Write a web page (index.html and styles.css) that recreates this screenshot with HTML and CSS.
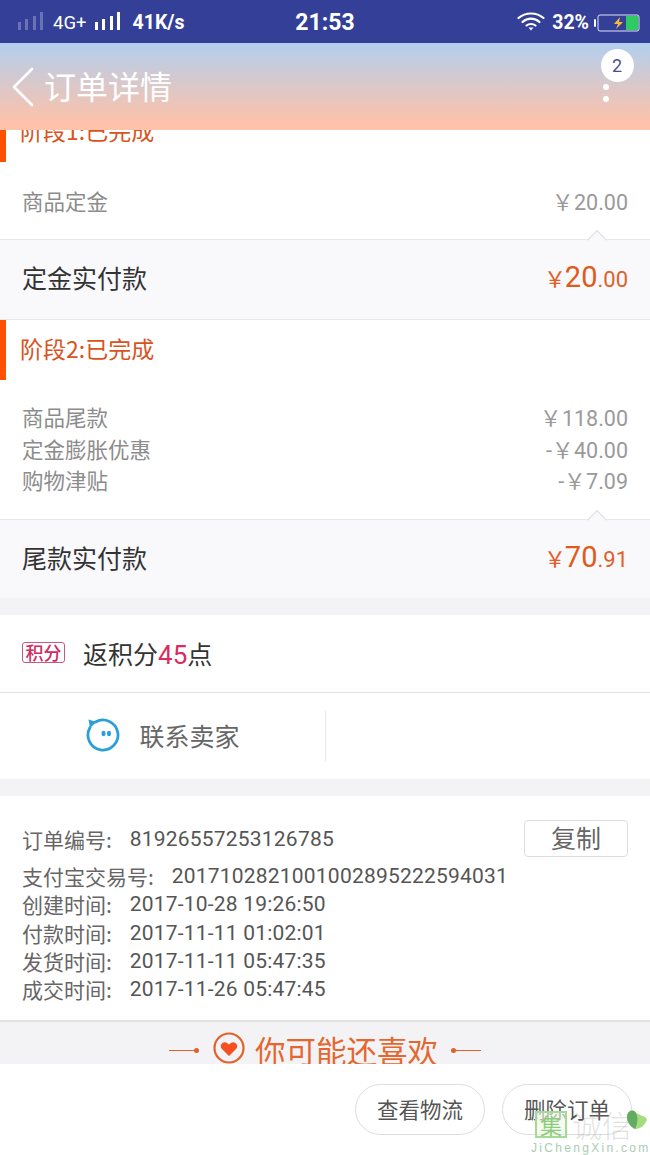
FILE: index.html
```html
<!DOCTYPE html>
<html lang="zh-CN">
<head>
    <meta charset="UTF-8">
    <meta name="viewport" content="width=device-width, initial-scale=1.0">
    <title>订单详情</title>
    <link rel="stylesheet" href="styles.css">
</head>
<body>
<div class="phone">

    <!-- Status bar -->
    <div class="statusbar">
        <div class="status-left">
            <svg class="signal dim" width="26" height="18" viewBox="0 0 26 18"><rect x="0" y="10" width="3" height="8"/><rect x="7" y="7" width="3" height="11"/><rect x="15" y="4" width="3" height="14"/><rect x="22" y="0" width="3" height="18"/></svg>
            <span class="net">4G+</span>
            <svg class="signal" width="26" height="18" viewBox="0 0 26 18"><rect x="0" y="10" width="3" height="8"/><rect x="7" y="7" width="3" height="11"/><rect x="15" y="4" width="3" height="14"/><rect x="22" y="0" width="3" height="18"/></svg>
            <span class="speed">41K/s</span>
        </div>
        <div class="clock">21:53</div>
        <div class="status-right">
            <svg class="wifi" width="28" height="20" viewBox="0 0 28 20" fill="none" stroke="#fff" stroke-width="2.2" stroke-linecap="round"><path d="M1.5 7C8.5 1 19.5 1 26.5 7"/><path d="M5.5 11C10.5 6.5 17.5 6.5 22.5 11"/><path d="M9.5 14.5C12 12.5 16 12.5 18.5 14.5"/><path d="M11.5 16.5L14 19.5L16.5 16.5Z" fill="#fff" stroke="none"/></svg>
            <span class="percent">32%</span>
            <svg class="battery" width="46" height="18" viewBox="0 0 46 18"><rect x="0" y="5" width="2" height="8" rx="1" fill="#fff"/><rect x="4" y="1" width="41" height="16" rx="2" fill="none" stroke="#dfe3f2" stroke-width="1"/><rect x="32" y="2" width="12" height="14" fill="#2ecb62"/><path d="M26 3L20 10H24L22 15L29 8H25Z" fill="#f2bd3c"/></svg>
        </div>
    </div>

    <!-- Title bar -->
    <div class="navbar">
        <svg class="back" width="24" height="40" viewBox="0 0 24 40" fill="none" stroke="#fff" stroke-width="2.6" stroke-linecap="round" stroke-linejoin="round"><path d="M21 2L3 20L21 38"/></svg>
        <h1 class="nav-title">订单详情</h1>
        <div class="menu">
            <span class="menu-badge">2</span>
            <span class="menu-dot"></span>
            <span class="menu-dot"></span>
        </div>
    </div>

    <!-- Scrolled order content -->
    <div class="scroll">
        <div class="scroll-inner">

            <div class="stage-head">阶段1:已完成</div>
            <div class="fees fees-single">
                <div class="fee"><span>商品定金</span><span class="fee-num">￥20.00</span></div>
            </div>
            <div class="total">
                <span class="notch"></span>
                <span>定金实付款</span>
                <span class="price"><i class="yen">￥</i><b>20</b>.00</span>
            </div>

            <div class="stage-head">阶段2:已完成</div>
            <div class="fees">
                <div class="fee"><span>商品尾款</span><span class="fee-num">￥118.00</span></div>
                <div class="fee"><span>定金膨胀优惠</span><span class="fee-num">-￥40.00</span></div>
                <div class="fee"><span>购物津贴</span><span class="fee-num">-￥7.09</span></div>
            </div>
            <div class="total total-last">
                <span class="notch"></span>
                <span>尾款实付款</span>
                <span class="price"><i class="yen">￥</i><b>70</b>.91</span>
            </div>

            <div class="gap"></div>

            <div class="points">
                <span class="points-tag">积分</span>
                <span>返积分<em>45</em>点</span>
            </div>

            <div class="contact">
                <div class="contact-cell">
                    <svg class="contact-icon" width="36" height="36" viewBox="0 0 36 36" fill="none"><path d="M9.5 5A15 15 0 1 1 4 10.5" stroke="#2a9fdc" stroke-width="2.8" stroke-linecap="round"/><path d="M2.5 2.5L10.5 5L4 11Z" fill="#2a9fdc"/><ellipse cx="17.5" cy="16.5" rx="2" ry="2.8" fill="#2a9fdc"/><ellipse cx="23" cy="16.5" rx="2" ry="2.8" fill="#2a9fdc"/></svg>
                    <span>联系卖家</span>
                </div>
                <div class="contact-cell"></div>
            </div>

            <div class="gap"></div>

            <div class="info">
                <div class="info-first">
                    <div class="info-row"><span class="info-label">订单编号:</span><span class="info-val">81926557253126785</span></div>
                    <button class="copy">复制</button>
                </div>
                <div class="info-row"><span class="info-label">支付宝交易号:</span><span class="info-val">2017102821001002895222594031</span></div>
                <div class="info-row"><span class="info-label">创建时间:</span><span class="info-val">2017-10-28 19:26:50</span></div>
                <div class="info-row"><span class="info-label">付款时间:</span><span class="info-val">2017-11-11 01:02:01</span></div>
                <div class="info-row"><span class="info-label">发货时间:</span><span class="info-val">2017-11-11 05:47:35</span></div>
                <div class="info-row"><span class="info-label">成交时间:</span><span class="info-val">2017-11-26 05:47:45</span></div>
            </div>

            <div class="recommend">
                <span class="rec-line"><i></i></span>
                <svg width="34" height="34" viewBox="0 0 34 34" fill="none"><circle cx="17" cy="17" r="14.5" stroke="#e2602a" stroke-width="2.2"/><path d="M17 25L9.5 17.5C7 14 11.5 9.5 15 12L17 13.5L19 12C22.5 9.5 27 14 24.5 17.5Z" fill="#f4511e"/></svg>
                <span class="rec-text">你可能还喜欢</span>
                <span class="rec-line rec-line-right"><i></i></span>
            </div>

        </div>
    </div>

    <!-- Order actions -->
    <div class="actions">
        <button class="pill">查看物流</button>
        <button class="pill">删除订单</button>
    </div>

    <!-- Site mark in the corner -->
    <div class="mark">
        <div class="mark-top">
            <span class="mark-box">集</span>
            <span class="mark-name">诚信</span>
            <svg class="mark-leaf" width="22" height="21" viewBox="0 0 22 21"><path d="M9 20C2 16 0 10 1.5 5C3 1 8 0 10 4C13 6 19 7 21 10C20 15 15 20 9 20Z" fill="#a5dc7e"/><path d="M9 20C2 16 0 10 1.5 5C3 1 8 0 10 4C12 8 12 14 9 20Z" fill="#62ab62"/></svg>
        </div>
        <div class="mark-url">JiChengXin.com</div>
    </div>

</div>
</body>
</html>
```

FILE: styles.css
```css
* {
    box-sizing: border-box;
}

body, html {
    margin: 0;
    padding: 0;
    background: #fff;
}

.phone {
    position: relative;
    width: 650px;
    height: 1155px;
    display: flex;
    flex-direction: column;
    overflow: hidden;
    font-family: "Noto Sans CJK SC", Roboto, sans-serif;
    color: #333;
}

/* Status bar */
.statusbar {
    height: 43px;
    flex: none;
    background: #343f98;
    color: #fff;
    display: grid;
    grid-template-columns: 1fr auto 1fr;
    align-items: center;
    padding: 2px 10px 0 18px;
    font-family: Roboto, sans-serif;
}

.status-left {
    display: flex;
    align-items: center;
    gap: 9px;
}

.status-right {
    display: flex;
    align-items: center;
    justify-content: flex-end;
    gap: 5px;
}

.signal {
    fill: #fff;
    margin-top: -3px;
}

.signal.dim {
    fill: #6a72b5;
}

.net {
    font-size: 18.5px;
    margin-right: -1px;
}

.speed {
    font-size: 19.5px;
    font-weight: 700;
    margin-left: 3px;
}

.clock {
    font-size: 23px;
    font-weight: 700;
    margin-left: -8px;
}

.percent {
    font-size: 19.5px;
    font-weight: 700;
    margin-left: 2px;
}

.wifi {
    margin-top: -4px;
}

/* Title bar */
.navbar {
    position: relative;
    height: 87px;
    flex: none;
    display: flex;
    align-items: center;
    gap: 9px;
    padding: 0 0 0 11px;
    background: linear-gradient(#b2cfee 0%, #fcc2ab 90%, #fdc2aa 100%);
}

.back {
    flex: none;
}

.nav-title {
    margin: 0 0 4px;
    font-size: 32px;
    font-weight: 400;
    color: #fff;
    line-height: 1;
}

.menu {
    position: absolute;
    top: 6px;
    right: 16px;
    width: 34px;
    display: flex;
    flex-direction: column;
    align-items: center;
}

.menu-badge {
    width: 33px;
    height: 33px;
    border-radius: 50%;
    background: #fff;
    color: #474f8f;
    font: 18px/33px Roboto, sans-serif;
    text-align: center;
    margin-bottom: 2px;
}

.menu-dot {
    width: 6px;
    height: 6px;
    border-radius: 50%;
    background: #fff;
    margin: 0 0 6px -22px;
}

/* Scrolled content */
.scroll {
    flex: 1;
    min-height: 0;
    overflow: hidden;
}

.scroll-inner {
    margin-top: -28px;
}

.stage-head {
    height: 60px;
    display: flex;
    align-items: center;
    padding: 0 0 4px 14px;
    border-left: 6px solid #ff5000;
    font-size: 23px;
    color: #d9531e;
}

.fees {
    height: 139px;
    padding-top: 21px;
    background: #fff;
}

.fees-single {
    height: 77px;
    padding-top: 23px;
}

.fee {
    height: 31.5px;
    display: flex;
    justify-content: space-between;
    align-items: center;
    padding: 0 22px;
    font-size: 21.5px;
    color: #8c8c8c;
}

.fee-num {
    font-family: Roboto, sans-serif;
    font-size: 21.5px;
    color: #9a9a9a;
}

.total {
    position: relative;
    height: 81px;
    display: flex;
    justify-content: space-between;
    align-items: center;
    padding: 0 22px 5px;
    background: #f9f8fb;
    border-top: 1px solid #e8e8ea;
    border-bottom: 1px solid #e8e8ea;
    font-size: 25px;
    color: #333;
}

.total-last {
    height: 79px;
    border-bottom: 0;
}

/* little arrow sitting on the top edge of the total row */
.notch {
    position: absolute;
    top: -7px;
    right: 46px;
    width: 14px;
    height: 14px;
    background: #f9f8fb;
    border-top: 1px solid #dedee0;
    border-left: 1px solid #dedee0;
    transform: rotate(45deg);
}

.price {
    font-family: Roboto, sans-serif;
    font-size: 22px;
    color: #e0602a;
}

.price b {
    font-size: 29px;
    font-weight: 400;
    color: #e2591c;
}

.yen {
    font-style: normal;
    font-size: 22px;
    margin-right: -1px;
}

.gap {
    height: 17px;
    background: #f3f3f5;
}

.points {
    height: 78px;
    display: flex;
    align-items: center;
    gap: 18px;
    padding: 0 0 2px 22px;
    font-size: 25px;
    color: #333;
    border-bottom: 1px solid #e2e2e2;
}

.points em {
    font-family: Roboto, sans-serif;
    font-style: normal;
    font-size: 26px;
    color: #dc2a5e;
}

.points-tag {
    width: 43px;
    height: 21px;
    border: 1px solid #c45a80;
    border-radius: 3px;
    font-size: 18px;
    font-weight: 500;
    line-height: 18px;
    text-align: center;
    color: #cf2c60;
}

.contact {
    height: 86px;
    display: grid;
    grid-template-columns: 326px 1fr;
    align-items: center;
}

.contact-cell {
    height: 50px;
    display: flex;
    align-items: center;
    justify-content: center;
    gap: 17px;
    padding-bottom: 3px;
    font-size: 25px;
    color: #666;
}

.contact-cell:first-child {
    border-right: 1px solid #e8e8e8;
}

.contact-icon {
    margin-left: 1px;
}

.info {
    height: 224px;
    padding: 25px 22px 0;
    font-size: 21px;
    color: #666;
}

.info-first {
    display: flex;
    justify-content: space-between;
    align-items: flex-start;
    height: 41px;
}

.info-row {
    height: 28.3px;
    display: flex;
    align-items: center;
    gap: 18px;
}

.info-first .info-row {
    height: 36px;
}

.info-val {
    font-family: Roboto, sans-serif;
    font-size: 21px;
    letter-spacing: .2px;
    color: #555;
}

.copy {
    width: 104px;
    height: 37px;
    margin-top: -1px;
    padding: 0 0 3px;
    border: 1px solid #dcdcdc;
    border-radius: 4px;
    background: #fff;
    font: 25px/1 "Noto Sans CJK SC", sans-serif;
    color: #666;
}

.recommend {
    height: 60px;
    padding-top: 9px;
    display: flex;
    align-items: flex-start;
    justify-content: center;
    gap: 9px;
    background: #f3f3f5;
    border-top: 2px solid #e2e2e2;
}

.rec-text {
    font-size: 30.5px;
    line-height: 38px;
    color: #e4672f;
}

.rec-line {
    position: relative;
    width: 30px;
    height: 1px;
    margin: 19px 4px 0 0;
    background: #e2602a;
}

.rec-line i {
    position: absolute;
    right: 0;
    top: -2px;
    width: 5px;
    height: 5px;
    border-radius: 50%;
    background: #e2602a;
}

.rec-line-right {
    margin: 19px 0 0 4px;
}

.rec-line-right i {
    left: 0;
    right: auto;
}

/* Bottom action bar */
.actions {
    height: 91px;
    flex: none;
    display: flex;
    justify-content: flex-end;
    align-items: flex-start;
    gap: 17px;
    padding: 20px 18px 0 0;
    background: #fff;
}

.pill {
    width: 130px;
    height: 51px;
    padding: 0 0 2px;
    border: 1px solid #dddddd;
    border-radius: 26px;
    background: #fff;
    font: 21.5px/1 "Noto Sans CJK SC", sans-serif;
    color: #555;
}

/* Corner mark, over the action bar */
.mark {
    position: absolute;
    right: 0;
    bottom: 0;
    width: 119px;
    height: 47px;
    display: flex;
    flex-direction: column;
    pointer-events: none;
}

.mark-top {
    height: 33px;
    display: flex;
    align-items: flex-end;
    gap: 5px;
    padding-left: 4px;
}

.mark-box {
    width: 32px;
    height: 27px;
    border: 2px solid #a4d998;
    background: rgba(238, 248, 226, .6);
    color: #8ccb7c;
    font-size: 22px;
    line-height: 22px;
    text-align: center;
}

.mark-name {
    font-size: 30px;
    line-height: 28px;
    font-weight: 300;
    color: rgba(170, 170, 170, .35);
    white-space: nowrap;
}

.mark-leaf {
    position: absolute;
    right: 2px;
    top: 1px;
}

.mark-url {
    margin-top: 3px;
    font: 12px/14px "Liberation Sans", sans-serif;
    letter-spacing: 2.3px;
    color: #a9cdb2;
    white-space: nowrap;
}
```
